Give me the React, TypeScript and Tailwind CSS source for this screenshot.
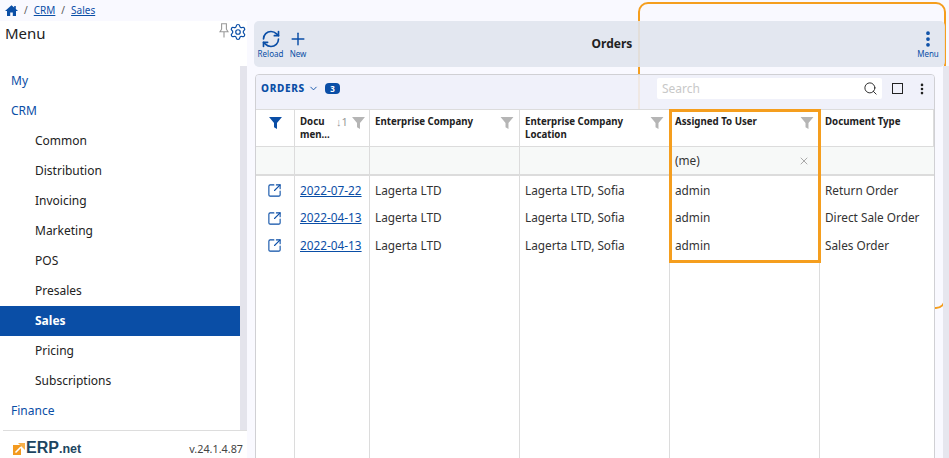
import { ChevronDown, SquareArrowOutUpRight, RefreshCw, Search, EllipsisVertical, Plus, Settings, X } from "lucide-react";

const menuItems = [
  { label: "My", top: true },
  { label: "CRM", top: true },
  { label: "Common" },
  { label: "Distribution" },
  { label: "Invoicing" },
  { label: "Marketing" },
  { label: "POS" },
  { label: "Presales" },
  { label: "Sales", active: true },
  { label: "Pricing" },
  { label: "Subscriptions" },
  { label: "Finance", top: true },
];

const rows = [
  { date: "2022-07-22", type: "Return Order" },
  { date: "2022-04-13", type: "Direct Sale Order" },
  { date: "2022-04-13", type: "Sales Order" },
];

function Funnel({ className }: { className: string }) {
  return (
    <svg viewBox="0 0 14 13" className={className} fill="currentColor">
      <path d="M0 0h14L8.6 6.4V13L5.4 11V6.4z" />
    </svg>
  );
}

function HeaderCell({ title, width, filter = true }: { title: string; width: string; filter?: boolean }) {
  return (
    <div className={`${width} shrink-0 border-r border-[#dcdcdc] flex justify-between pl-[5px] pr-[5px] pt-[5px] h-full`}>
      <span className="text-[9.7px] leading-[13px] font-bold text-[#222]">{title}</span>
      {filter && <Funnel className="w-[14px] h-[12px] mt-[2px] text-[#b5b5b5] shrink-0" />}
    </div>
  );
}

export default function App() {
  return (
    <div className="relative w-[949px] h-[458px] overflow-hidden bg-[#f9f9ff] font-['Noto_Sans',sans-serif] text-[#222]">
      {/* orange tour highlight behind the panels */}
      <div className="absolute left-[638px] top-[2px] w-[308px] h-[307px] border-2 border-[#f59e1e] rounded-[10px]" />

      <div className="relative h-[21px] flex items-center gap-[6px] pl-[5px] text-[10px] text-[#555]">
        <svg viewBox="0 0 13 11" className="w-[13px] h-[11px] text-[#0a4ea6]" fill="currentColor">
          <path d="M6.5 0.3 0 6h2v5h3.2V7.4h2.6V11H11V6h2L10.8 4V1H9.2v1.6z" />
        </svg>
        <span>/</span>
        <span className="text-[#0a4ea6] underline">CRM</span>
        <span>/</span>
        <span className="text-[#0a4ea6] underline">Sales</span>
      </div>

      <div className="relative flex h-[437px]">
        <aside className="w-[247px] shrink-0 bg-white flex flex-col">
          <div className="h-[45px] shrink-0 flex justify-between pl-[5px]">
            <span className="text-[15px] leading-[24px]">Menu</span>
            <div className="flex pt-[2px] h-fit">
              <svg viewBox="0 0 10 15" className="w-[10px] h-[15px] text-[#999]" fill="none" stroke="currentColor" strokeWidth="1.1">
                <path d="M2.6 0.8h4.8v5.4L9 8.8H1l1.6-2.6zM5 8.8v5.6" />
              </svg>
              <Settings className="w-[18px] h-[18px] text-[#0a4ea6]" strokeWidth={1.6} />
            </div>
          </div>
          <div className="flex-1 flex min-h-0">
            <nav className="w-[240px]">
              {menuItems.map((item) => (
                <div
                  key={item.label}
                  className={`h-[30px] flex items-center text-[12px] ${item.top ? "pl-[11px] text-[#0a4ea6]" : "pl-[35px]"} ${item.active ? "bg-[#0a4ea6] text-white font-bold" : ""}`}
                >
                  {item.label}
                </div>
              ))}
            </nav>
            <div className="w-[7px] bg-[#e4e4ec]" />
          </div>
          <div className="h-[28px] ml-[3px] shrink-0 border-t border-[#ddd] flex items-end justify-between pr-[4px] pl-[10px] pb-[1px]">
            <div className="flex items-center gap-[1px]">
              <svg viewBox="0 0 12 12" className="w-[12px] h-[12px]">
                <path d="M0 2h8v10H0z" fill="#f39a1f" />
                <path d="M5 0h7v7z" fill="#f7b04a" />
                <path d="M2.5 9.5 8 4" stroke="#fff" strokeWidth="1.6" />
              </svg>
              <span className="text-[16px] leading-[16px] font-bold text-[#1d4560] font-['Liberation_Sans',sans-serif]">
                ERP<span className="text-[12.5px]">.net</span>
              </span>
            </div>
            <span className="text-[10.8px] leading-[16px] text-[#444]">v.24.1.4.87</span>
          </div>
        </aside>

        <main className="flex-1 min-w-0 pl-[7px]">
          <div className="relative h-[46px] w-[691px] rounded-[5px] bg-[#e0e4ee]/90 flex items-center justify-between text-[#0a4ea6]">
            <div className="flex gap-[5px] pl-[4px]">
              <div className="flex flex-col items-center w-[25px]">
                <RefreshCw className="w-[20px] h-[20px]" strokeWidth={2} />
                <span className="text-[8px] leading-[10px]">Reload</span>
              </div>
              <div className="flex flex-col items-center w-[20px]">
                <Plus className="w-[20px] h-[20px]" strokeWidth={1.75} />
                <span className="text-[8px] leading-[10px]">New</span>
              </div>
            </div>
            <span className="text-[12px] font-bold text-[#222]">Orders</span>
            <div className="flex flex-col items-center w-[24px] mr-[5px]">
              <EllipsisVertical className="w-[20px] h-[20px]" strokeWidth={2.5} />
              <span className="text-[8px] leading-[10px]">Menu</span>
            </div>
          </div>

          <div className="relative flex mt-[7px] ml-[1px] h-[392px]">
            <div className="w-[680px] border border-[#d0d0d4] rounded-t-[4px] overflow-hidden">
              <div className="h-[34px] bg-[#eef0f9]/90 flex items-start justify-between pl-[5px] pr-[5px] pt-[3px]">
                <div className="flex items-center gap-[3px] h-[21px]">
                  <span className="text-[10px] font-extrabold tracking-[0.7px] text-[#0a4ea6]">ORDERS</span>
                  <ChevronDown className="w-[11px] h-[11px] text-[#0a4ea6]" />
                  <span className="ml-[3px] w-[15px] h-[11px] rounded-[4px] bg-[#0a4ea6] text-white text-[8px] font-bold leading-[11px] text-center">3</span>
                </div>
                <div className="flex items-center">
                  <div className="w-[225px] h-[21px] bg-white rounded-[2px] flex items-center justify-between pl-[5px] pr-[4px]">
                    <span className="text-[12px] text-[#c8c8c8]">Search</span>
                    <Search className="w-[15px] h-[15px] text-[#222]" strokeWidth={1.5} />
                  </div>
                  <div className="w-[11px] h-[11px] ml-[10px] border-[1.5px] border-[#222]" />
                  <EllipsisVertical className="w-[14px] h-[14px] ml-[12px] text-[#222]" strokeWidth={2.5} />
                </div>
              </div>

              <div className="h-[38px] flex border-t border-b border-[#dcdcdc] bg-white">
                <div className="w-[39px] shrink-0 border-r border-[#dcdcdc] flex justify-center pt-[7px]">
                  <Funnel className="w-[13px] h-[12px] text-[#0a4ea6]" />
                </div>
                <div className="w-[75px] shrink-0 border-r border-[#dcdcdc] flex pl-[5px] pt-[5px]">
                  <span className="text-[9.7px] leading-[13px] font-bold w-[36px]">Docu men...</span>
                  <span className="text-[11px] text-[#999] leading-[14px] w-[16px] whitespace-nowrap">↓1</span>
                  <Funnel className="w-[13px] h-[12px] mt-[2px] text-[#b5b5b5] shrink-0" />
                </div>
                <HeaderCell title="Enterprise Company" width="w-[150px]" />
                <HeaderCell title="Enterprise Company Location" width="w-[150px]" />
                <HeaderCell title="Assigned To User" width="w-[150px]" />
                <HeaderCell title="Document Type" width="w-[114px]" filter={false} />
              </div>

              <div className="h-[29px] flex border-b-[2px] border-[#dcdcdc] bg-[#f7f9f8]">
                <div className="w-[39px] shrink-0 border-r border-[#dcdcdc]" />
                <div className="w-[75px] shrink-0 border-r border-[#dcdcdc]" />
                <div className="w-[150px] shrink-0 border-r border-[#dcdcdc]" />
                <div className="w-[150px] shrink-0 border-r border-[#dcdcdc]" />
                <div className="w-[150px] shrink-0 border-r border-[#dcdcdc] flex items-center justify-between pl-[5px] pr-[9px]">
                  <span className="text-[11.8px] text-[#333]">(me)</span>
                  <X className="w-[12px] h-[12px] text-[#aaa]" />
                </div>
              </div>

              <div className="flex h-[290px] bg-white text-[11.8px] text-[#333]">
                <div className="w-[39px] shrink-0 border-r border-[#dcdcdc] pt-[1px] pr-[1px]">
                  {rows.map((row, i) => (
                    <div key={i} className="h-[27.5px] flex items-center justify-center">
                      <SquareArrowOutUpRight className="w-[15px] h-[15px] text-[#0a4ea6]" strokeWidth={1.75} />
                    </div>
                  ))}
                </div>
                <div className="w-[75px] shrink-0 border-r border-[#dcdcdc] pl-[5px] pt-[1px]">
                  {rows.map((row, i) => (
                    <div key={i} className="h-[27.5px] flex items-center text-[#0a4ea6] underline">{row.date}</div>
                  ))}
                </div>
                <div className="w-[150px] shrink-0 border-r border-[#dcdcdc] pl-[5px] pt-[1px]">
                  {rows.map((row, i) => (
                    <div key={i} className="h-[27.5px] flex items-center">Lagerta LTD</div>
                  ))}
                </div>
                <div className="w-[150px] shrink-0 border-r border-[#dcdcdc] pl-[5px] pt-[1px]">
                  {rows.map((row, i) => (
                    <div key={i} className="h-[27.5px] flex items-center">Lagerta LTD, Sofia</div>
                  ))}
                </div>
                <div className="w-[150px] shrink-0 border-r border-[#dcdcdc] pl-[5px] pt-[1px]">
                  {rows.map((row, i) => (
                    <div key={i} className="h-[27.5px] flex items-center">admin</div>
                  ))}
                </div>
                <div className="w-[114px] shrink-0 pl-[5px] pt-[1px]">
                  {rows.map((row, i) => (
                    <div key={i} className="h-[27.5px] flex items-center">{row.type}</div>
                  ))}
                </div>
              </div>
            </div>
            {/* page scrollbar, sits over the highlight */}
            <div className="absolute right-0 top-[-8px] w-[6px] h-[400px] bg-[#e6e6ee]" />
          </div>
        </main>
      </div>

      {/* highlighted column */}
      <div className="absolute left-[669px] top-[109px] w-[152px] h-[154px] border-[3px] border-[#f59e1e]" />
    </div>
  );
}
